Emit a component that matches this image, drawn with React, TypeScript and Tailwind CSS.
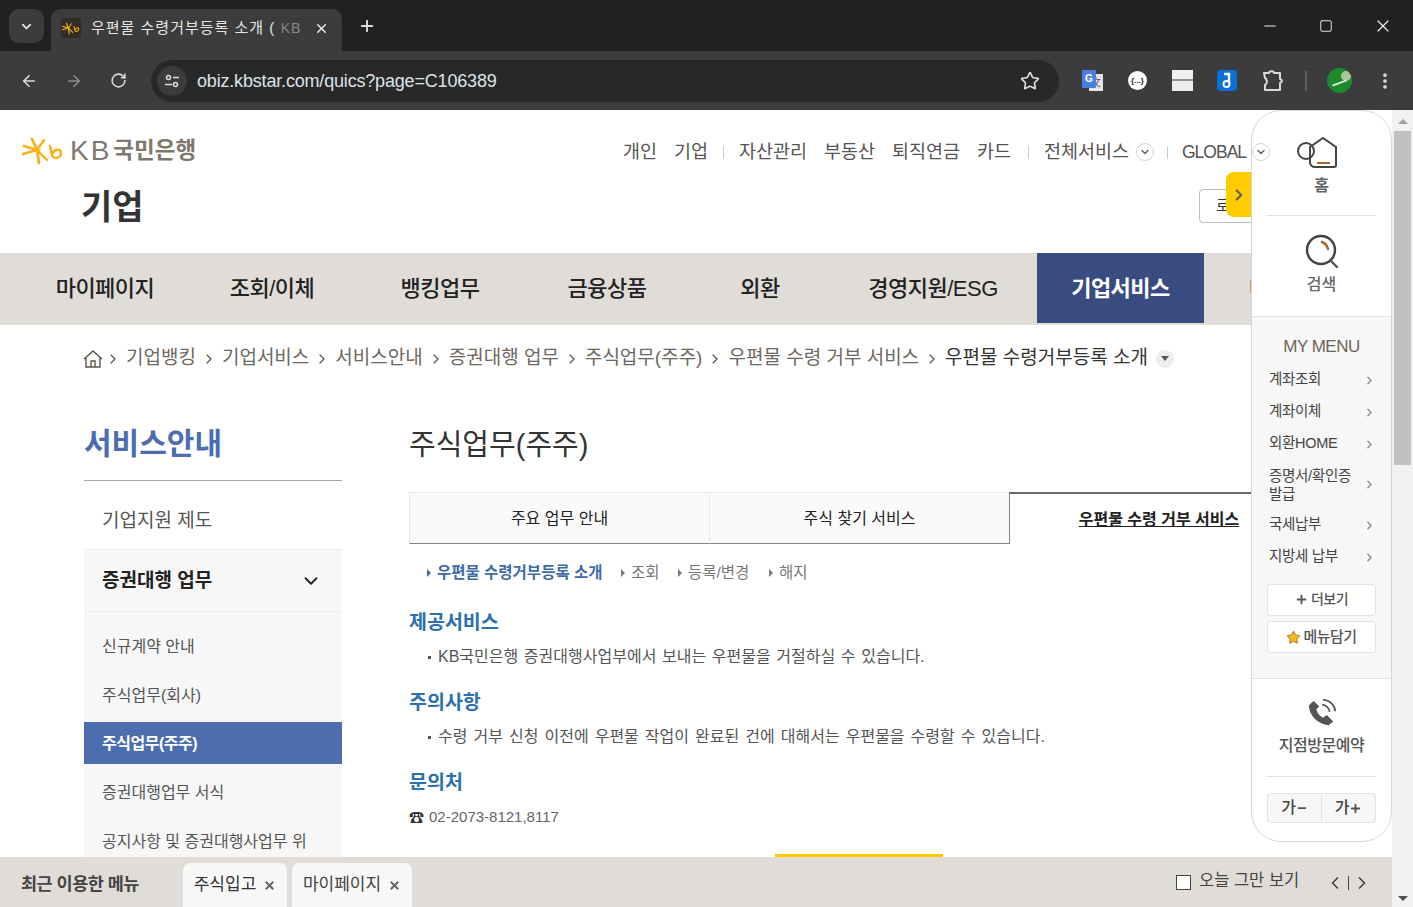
import { ArrowLeft, ArrowRight, ChevronDown, ChevronLeft, ChevronRight, Minus, MoreVertical, Plus, RotateCw, Square, Star, X } from 'lucide-react';

const font = "font-['Liberation_Sans','Noto_Sans_CJK_KR',sans-serif]";

const mainNav = [
  { label: '마이페이지', w: 'w-[210px]' },
  { label: '조회/이체', w: 'w-[124px]' },
  { label: '뱅킹업무', w: 'w-[212px]' },
  { label: '금융상품', w: 'w-[122px]' },
  { label: '외환', w: 'w-[184px]' },
  { label: '경영지원/ESG', w: 'w-[185px] pr-[23px]' },
];

const crumbs = ['기업뱅킹', '기업서비스', '서비스안내', '증권대행 업무', '주식업무(주주)', '우편물 수령 거부 서비스'];

const myMenu = ['계좌조회', '계좌이체', '외환HOME'];
const myMenu2 = ['국세납부', '지방세 납부'];

function KbLogo({ className }: { className: string }) {
  return (
    <svg viewBox="0 0 42 28" className={className} fill="none" strokeLinecap="round">
      <path d="M2 9 L15 13 L1 17" stroke="#fbb116" strokeWidth="2.6" />
      <path d="M10 2 L15 13 L17 26" stroke="#fbb116" strokeWidth="2.8" />
      <path d="M22 3 L15 13 L25 23" stroke="#fbb116" strokeWidth="2.4" />
      <path d="M28 9 L30 18 C31 23 40 21 39 15 C38 11 32 12 30 18" stroke="#fbb116" strokeWidth="2.4" />
    </svg>
  );
}

function RoundChevron({ className }: { className: string }) {
  return (
    <span className={`flex h-[18px] w-[18px] items-center justify-center rounded-full border border-[#d5d5d5] bg-white ${className}`}>
      <ChevronDown size={12} strokeWidth={3} color="#666" />
    </span>
  );
}

function Arrow() {
  return <span className="mr-[6px] inline-block h-0 w-0 border-y-[4px] border-l-[4px] border-y-transparent border-l-current" />;
}

export default function App() {
  return (
    <div className={`relative flex h-[907px] w-[1413px] flex-col overflow-hidden bg-[#3c3c3c] ${font}`}>
      {/* tab strip */}
      <div className="flex h-[51px] items-start bg-[#202221] pl-[9px] pt-[9px]">
        <div className="flex h-[34px] w-[35px] items-center justify-center rounded-[10px] bg-[#3c3c3c]">
          <ChevronDown size={15} strokeWidth={3} color="#e4e4e4" />
        </div>
        <div className="ml-[7px] flex h-[42px] w-[291px] items-center rounded-t-[10px] bg-[#3c3c3c] pb-[4px] pl-[10px]">
          <div className="flex h-[20px] w-[20px] items-center justify-center rounded-[3px] bg-[#332d26]">
            <KbLogo className="h-[15px] w-[18px]" />
          </div>
          <span className="ml-[10px] w-[210px] text-[15px] tracking-[1px] whitespace-nowrap text-[#e6e6e6]">
            우편물 수령거부등록 소개 ( <span className="font-['Open_Sans'] text-[#8a8a8a]">KB</span>
          </span>
          <X size={15} strokeWidth={2.5} color="#e6e6e6" className="ml-[13px]" />
        </div>
        <Plus size={18} strokeWidth={2.5} color="#dedede" className="mt-[8px] ml-[16px]" />
        <div className="ml-auto flex items-center pt-[7px] pr-[20px]">
          <Minus size={18} strokeWidth={1.5} color="#f0f0f0" />
          <Square size={14} strokeWidth={1.6} color="#f0f0f0" className="ml-[40px]" />
          <X size={20} strokeWidth={1.4} color="#f0f0f0" className="ml-[40px]" />
        </div>
      </div>

      {/* toolbar */}
      <div className="flex h-[59px] items-center bg-[#3c3c3c] pl-[20px]">
        <ArrowLeft size={18} strokeWidth={2.2} color="#dadada" />
        <ArrowRight size={18} strokeWidth={2.2} color="#8a8a8a" className="ml-[27px]" />
        <RotateCw size={17} strokeWidth={2.2} color="#dadada" className="ml-[27px]" />
        <div className="ml-[24px] flex h-[42px] w-[908px] items-center rounded-full bg-[#282828] pl-[6px]">
          <span className="flex h-[30px] w-[30px] items-center justify-center rounded-full bg-[#3c3c3c]">
            <svg viewBox="0 0 16 16" className="h-[16px] w-[16px]" fill="none" stroke="#ddd" strokeWidth="1.5">
              <circle cx="4.5" cy="4.5" r="2" />
              <path d="M9 4.5h6M1 11.5h7" />
              <circle cx="11.5" cy="11.5" r="2" />
            </svg>
          </span>
          <span className="mb-[-1px] ml-[10px] text-[18px] tracking-[-0.18px] text-[#dce3ea]">obiz.kbstar.com/quics?page=C106389</span>
          <Star size={20} strokeWidth={2} color="#dcdcdc" className="mr-[19px] ml-auto" />
        </div>
        {/* extensions */}
        <div className="relative ml-[23px] h-[22px] w-[22px]">
          <span className="absolute top-[4px] left-[7px] flex h-[17px] w-[14px] items-center justify-center bg-[#e4e4e4] text-[10px] text-[#555]">文</span>
          <span className="absolute top-0 left-0 flex h-[18px] w-[14px] items-center justify-center rounded-[1px] bg-[#4a7fe0] text-[10px] font-bold text-white">G</span>
        </div>
        <span className="ml-[24px] flex h-[19px] w-[19px] items-center justify-center rounded-full bg-white text-[8px] font-bold text-[#222]">{'{...}'}</span>
        <div className="ml-[25px] flex h-[21px] w-[21px] flex-col justify-between bg-[#8f8f8f]">
          <div className="h-[9px] bg-[#f0f0f0]" />
          <div className="h-[10px] bg-[#ececec]" />
        </div>
        <svg viewBox="0 0 20 21" className="ml-[24px] h-[21px] w-[20px]" fill="none">
          <rect width="20" height="21" rx="4" fill="#0b6fd8" />
          <path d="M7 4 H12 V13" stroke="#fff" strokeWidth="2.4" />
          <circle cx="9.5" cy="14" r="3" stroke="#fff" strokeWidth="2" />
        </svg>
        <svg viewBox="0 0 22 22" className="ml-[25px] h-[22px] w-[22px]" fill="none" stroke="#dadada" strokeWidth="2" strokeLinejoin="round">
          <path d="M2 3 H7 C7 0.5 12 0.5 12 3 H18 V9 C20.5 10 20.5 12 18 13 V20 H3 V15 C5.5 14 5.5 9 3 8 Z" />
        </svg>
        <div className="ml-[21px] h-[20px] w-[2px] bg-[#606060]" />
        <div className="relative ml-[20px] h-[25px] w-[25px] overflow-hidden rounded-full bg-[#1e8a2e]">
          <div className="absolute top-[3px] left-[14px] h-[10px] w-[10px] rounded-full bg-[#a9c79a]" />
          <div className="absolute top-[14px] left-[5px] h-[2px] w-[15px] rotate-[-20deg] bg-[#dfeadb]" />
        </div>
        <MoreVertical size={20} strokeWidth={2.5} color="#d8d8d8" className="ml-[23px]" />
      </div>

      {/* page */}
      <div className="relative flex h-[797px] bg-white">
        <div className="relative h-full w-[1392px] overflow-hidden bg-white">
          {/* header */}
          <div className="relative h-[143px]">
            <div className="flex items-center pt-[26px] pl-[22px]">
              <KbLogo className="h-[28px] w-[42px]" />
              <span className="ml-[6px] text-[28px] leading-[30px] font-normal tracking-[2px] text-[#7f786f]">KB</span>
              <span className="ml-[2px] text-[22.5px] leading-[30px] font-bold text-[#7f786f]">국민은행</span>
            </div>
            <div className="absolute top-[29px] left-[623px] z-10 flex items-center text-[18.5px] leading-[26px] whitespace-nowrap text-[#555]">
              <span className="w-[51px]">개인</span>
              <span className="w-[49px]">기업</span>
              <span className="mr-[15px] h-[13px] w-px bg-[#ccc]" />
              <span className="w-[85px]">자산관리</span>
              <span className="w-[68px]">부동산</span>
              <span className="w-[85px]">퇴직연금</span>
              <span className="w-[51px]">카드</span>
              <span className="mr-[15px] h-[13px] w-px bg-[#ccc]" />
              <span className="w-[87px]">전체서비스</span>
              <RoundChevron className="ml-[5px]" />
              <span className="mr-[14px] ml-[13px] h-[13px] w-px bg-[#ccc]" />
              <span className="w-[64px] text-[17.5px] tracking-[-1px]">GLOBAL</span>
              <RoundChevron className="ml-[6px]" />
            </div>
            <div className="mt-[19px] pl-[81px] text-[34px] leading-[44px] font-bold text-[#333]">기업</div>
            <div className="absolute top-[79px] left-[1199px] flex h-[34px] w-[80px] items-center rounded-[4px] border border-[#bbb] pl-[16px] text-[15px] text-[#333]">로그인</div>
            <div className="absolute top-[62px] left-[1226px] flex h-[45px] w-[26px] items-center justify-center rounded-l-[8px] bg-[#ffcc00]">
              <ChevronRight size={18} strokeWidth={3} color="#6b6256" />
            </div>
          </div>

          {/* main nav */}
          <div className="flex h-[72px] bg-[#e0ddd8] text-[22px] tracking-[-0.5px] text-[#222]">
            {mainNav.map((n) => (
              <div key={n.label} className={`${n.w} flex h-[70px] items-center justify-center font-medium whitespace-nowrap`}>{n.label}</div>
            ))}
            <div className="flex h-[70px] w-[167px] items-center justify-center bg-[#384c82] font-bold text-white">기업서비스</div>
            <div className="flex h-[70px] items-center pl-[45px] font-medium">마</div>
          </div>

          {/* breadcrumb */}
          <div className="flex h-[64px] items-center pt-[3px] pl-[83px] text-[19px] whitespace-nowrap text-[#6e6860]">
            <svg viewBox="0 0 20 20" className="h-[20px] w-[20px]" fill="none" stroke="#5c5345" strokeWidth="1.4">
              <path d="M1 10 L10 2 L19 10 M3 9 V18 H17 V9 M8 18 V12 H12 V18" />
            </svg>
            {crumbs.map((c) => (
              <span key={c} className="flex items-center">
                <ChevronRight size={16} strokeWidth={1.8} color="#555" className="mx-[2px]" />
                <span className="mx-[3px]">{c}</span>
              </span>
            ))}
            <span className="flex items-center">
              <ChevronRight size={16} strokeWidth={1.8} color="#555" className="mx-[2px]" />
              <span className="mx-[3px] text-[#333]">우편물 수령거부등록 소개</span>
            </span>
            <span className="ml-[5px] flex h-[18px] w-[18px] items-center justify-center rounded-full bg-[#eee]">
              <span className="h-0 w-0 border-x-[4px] border-t-[5px] border-x-transparent border-t-[#555]" />
            </span>
          </div>

          {/* body */}
          <div className="flex pt-[24px] pl-[84px]">
            <div className="w-[258px]">
              <div className="h-[68px] border-b border-[#aaa6a0] text-[30px] leading-[62px] font-semibold text-[#4c6eaf]">서비스안내</div>
              <div className="flex h-[68px] items-center pt-[12px] pl-[18px] text-[19px] text-[#555]">기업지원 제도</div>
              <div className="bg-[#f7f7f7]">
                <div className="flex h-[63px] items-center justify-between border-y border-[#ebebeb] pt-[1px] pr-[20px] pl-[18px] text-[19px] font-bold text-[#222]">
                  증권대행 업무
                  <ChevronDown size={22} strokeWidth={2} color="#222" />
                </div>
                <div className="pt-[11px] text-[16px] text-[#555]">
                  <div className="flex h-[48px] items-center pl-[18px]">신규계약 안내</div>
                  <div className="mb-[2px] flex h-[49px] items-center pl-[18px]">주식업무(회사)</div>
                  <div className="flex h-[42px] items-center bg-[#4c6eaf] pt-[1px] pl-[18px] font-bold tracking-[-0.5px] text-white">주식업무(주주)</div>
                  <div className="flex h-[58px] items-center pl-[18px]">증권대행업무 서식</div>
                  <div className="flex h-[40px] items-center pl-[18px] whitespace-nowrap">공지사항 및 증권대행사업무 위</div>
                </div>
              </div>
            </div>

            <div className="ml-[67px] w-[900px]">
              <h2 className="pt-[12px] text-[29px] leading-[40px] text-[#333]">주식업무(주주)</h2>
              <div className="mt-[27px] flex h-[52px] text-[16px] text-[#222]">
                <div className="flex w-[300px] items-center justify-center border-t border-b border-l border-[#e8e8e8] border-b-[#8a8178] bg-[#fafafa] pt-[2px]">주요 업무 안내</div>
                <div className="flex w-[300px] items-center justify-center border-t border-b border-l border-[#e8e8e8] border-b-[#8a8178] bg-[#fafafa] pt-[2px]">주식 찾기 서비스</div>
                <div className="flex w-[300px] items-start justify-center border-x border-t-2 border-x-[#8a8178] border-t-[#6e6860] pt-[14px] font-bold underline">우편물 수령 거부 서비스</div>
              </div>
              <div className="mt-[18px] flex h-[22px] items-center pl-[18px] text-[15.5px] text-[#777]">
                <span className="flex w-[194px] items-center font-bold text-[#3d6aa8]"><Arrow />우편물 수령거부등록 소개</span>
                <span className="flex w-[57px] items-center"><Arrow />조회</span>
                <span className="flex w-[91px] items-center"><Arrow />등록/변경</span>
                <span className="flex items-center"><Arrow />해지</span>
              </div>
              <h3 className="mt-[24px] text-[19.5px] leading-[28px] font-bold text-[#2c70ad]">제공서비스</h3>
              <p className="mt-[9px] flex items-center pl-[19px] text-[16px] leading-[24px] [word-spacing:1.2px] text-[#555]">
                <span className="mr-[7px] h-[3px] w-[3px] bg-[#555]" />KB국민은행 증권대행사업부에서 보내는 우편물을 거절하실 수 있습니다.
              </p>
              <h3 className="mt-[19px] text-[19.5px] leading-[28px] font-bold text-[#2c70ad]">주의사항</h3>
              <p className="mt-[9px] flex items-center pl-[19px] text-[16px] leading-[24px] [word-spacing:1.6px] text-[#555]">
                <span className="mr-[7px] h-[3px] w-[3px] bg-[#555]" />수령 거부 신청 이전에 우편물 작업이 완료된 건에 대해서는 우편물을 수령할 수 있습니다.
              </p>
              <h3 className="mt-[19px] text-[19.5px] leading-[28px] font-bold text-[#2c70ad]">문의처</h3>
              <p className="mt-[9px] flex items-center text-[15px] leading-[24px] text-[#666]">
                <span className="mr-[5px] text-[15px] leading-none text-[#333]">☎</span>02-2073-8121,8117
              </p>
            </div>
          </div>

          {/* recently used bar */}
          <div className="absolute right-0 bottom-0 left-0 flex h-[50px] items-end bg-[#e0ddd8]">
            <div className="absolute -top-[3px] left-[775px] h-[3px] w-[168px] bg-[#ffcc00]" />
            <span className="mb-[10px] w-[183px] pl-[21px] text-[17.5px] leading-[26px] font-bold tracking-[-0.5px] text-[#444]">최근 이용한 메뉴</span>
            <div className="flex h-[44px] w-[104px] items-center justify-center rounded-t-[7px] bg-[#f7f7f7] text-[17px] whitespace-nowrap text-[#333]">
              주식입고<X size={13} strokeWidth={3.5} color="#666" className="ml-[7px]" />
            </div>
            <div className="ml-[5px] flex h-[44px] w-[120px] items-center justify-center rounded-t-[7px] bg-[#f7f7f7] text-[17px] whitespace-nowrap text-[#444]">
              마이페이지<X size={13} strokeWidth={3.5} color="#666" className="ml-[7px]" />
            </div>
            <div className="mb-[10px] ml-auto flex items-center pr-[20px] text-[16.5px] text-[#444]">
              <span className="mr-[8px] h-[15px] w-[15px] border border-[#444] bg-white" />
              <span className="mb-[4px] w-[126px] whitespace-nowrap">오늘 그만 보기</span>
              <ChevronLeft size={20} strokeWidth={2} color="#444" />
              <span className="mx-[3px] h-[14px] w-px bg-[#444]" />
              <ChevronRight size={20} strokeWidth={2} color="#444" />
            </div>
          </div>

          {/* quick panel */}
          <div className="absolute top-0 left-[1251px] h-[732px] w-[141px] overflow-hidden rounded-[30px] border border-[#d6d6d6] bg-white">
            <div className="mx-[15px] flex h-[105px] flex-col items-center border-b border-[#dfdfdf] pt-[26px]">
              <svg viewBox="0 0 42 32" className="mr-[8px] h-[32px] w-[42px]" fill="none" stroke="#444" strokeWidth="2">
                <circle cx="9" cy="14" r="8" />
                <path d="M26 1 L39 10 V28 Q39 30 37 30 H18 Q14 30 13 26 L13 10 Z" />
                <path d="M20 26 H33" stroke="#a5642a" />
              </svg>
              <span className="mt-[7px] text-[16px] leading-[20px] font-semibold text-[#666]">홈</span>
            </div>
            <div className="flex h-[100px] flex-col items-center pt-[18px]">
              <svg viewBox="0 0 36 36" className="h-[36px] w-[36px]" fill="none" strokeWidth="2.4" strokeLinecap="round">
                <circle cx="17" cy="16" r="14" stroke="#444" />
                <path d="M26 26 L33 33" stroke="#555" />
                <path d="M18 8 C21 9 23 11 24 15" stroke="#a5642a" />
              </svg>
              <span className="mt-[5px] text-[16px] leading-[20px] font-medium text-[#666]">검색</span>
            </div>
            <div className="h-[363px] border-y border-[#e2e2e2] bg-[#f7f7f7] px-[15px] pt-[18px]">
              <div className="text-center text-[17px] leading-[24px] tracking-[-0.5px] text-[#6e6458]">MY MENU</div>
              <div className="mt-[5px] text-[14.5px] tracking-[-0.3px] text-[#444]">
                {myMenu.map((m) => (
                  <div key={m} className="flex h-[32px] items-center justify-between pl-[2px]">
                    {m}
                    <ChevronRight size={13} strokeWidth={2.4} color="#888" />
                  </div>
                ))}
                <div className="flex h-[49px] items-center justify-between pl-[2px] leading-[18px]">
                  <span>증명서/확인증<br />발급</span>
                  <ChevronRight size={13} strokeWidth={2.4} color="#888" />
                </div>
                {myMenu2.map((m) => (
                  <div key={m} className="flex h-[32px] items-center justify-between pl-[2px]">
                    {m}
                    <ChevronRight size={13} strokeWidth={2.4} color="#888" />
                  </div>
                ))}
              </div>
              <div className="mt-[11px] flex h-[32px] items-center justify-center rounded-[3px] border border-[#e2e2e2] bg-white pb-[1px] text-[14px] font-medium tracking-[-0.5px] text-[#555]">
                <Plus size={13} strokeWidth={3.5} color="#555" className="mr-[3px]" />더보기
              </div>
              <div className="mt-[5px] flex h-[32px] items-center justify-center rounded-[3px] border border-[#e2e2e2] bg-white text-[15px] font-medium tracking-[-0.5px] text-[#555]">
                <Star size={15} strokeWidth={1.5} fill="#f7bb1c" color="#9a7a20" className="mr-[2px]" />메뉴담기
              </div>
            </div>
            <div className="mx-[15px] flex h-[98px] flex-col items-center border-b border-[#dfdfdf] pt-[19px]">
              <svg viewBox="0 0 32 32" className="h-[30px] w-[30px]" fill="none">
                <path d="M8 3 L3 8 C3 18 12 28 24 29 L29 25 L22 18 L18 21 C14 19 12 16 11 12 L14 9 Z" fill="#555" transform="translate(-1,0)" />
                <path d="M16 7 C20 7 24 11 24 15 M17 2 C24 2 30 8 30 14" stroke="#555" strokeWidth="1.8" />
              </svg>
              <span className="mt-[6px] text-[16px] leading-[24px] font-medium tracking-[-0.5px] text-[#555]">지점방문예약</span>
            </div>
            <div className="mx-[15px] mt-[16px] flex h-[30px] items-center rounded-[4px] border border-[#e2e2e2] bg-[#f7f7f7] text-[16px] font-medium text-[#444]">
              <span className="flex h-full w-[54px] items-center justify-center border-r border-[#e2e2e2]">가<Minus size={12} strokeWidth={3.5} color="#555" /></span>
              <span className="flex h-full flex-1 items-center justify-center">가<Plus size={13} strokeWidth={3.5} color="#555" /></span>
            </div>
          </div>
        </div>

        {/* scrollbar */}
        <div className="flex h-full w-[21px] flex-col items-center bg-[#f1f1f1]">
          <span className="mt-[9px] h-0 w-0 border-x-[5px] border-b-[5px] border-x-transparent border-b-[#a0a0a0]" />
          <div className="mt-[7px] h-[334px] w-[17px] bg-[#c1c1c1]" />
          <span className="mt-auto mb-[6px] h-0 w-0 border-x-[5px] border-t-[5px] border-x-transparent border-t-[#505050]" />
        </div>
      </div>
    </div>
  );
}
